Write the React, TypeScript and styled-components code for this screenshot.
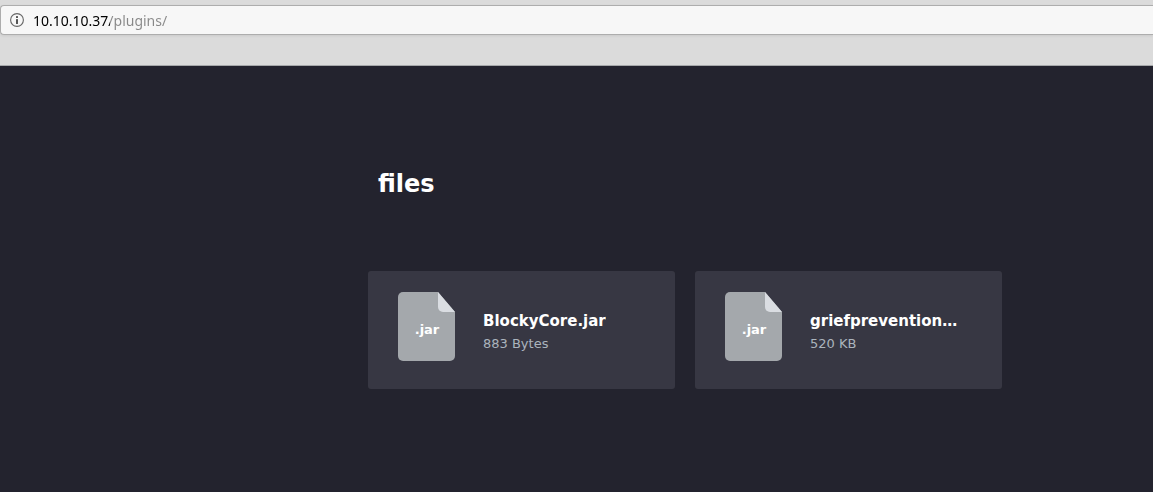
import React from "react";
import styled, { createGlobalStyle } from "styled-components";

const GlobalStyle = createGlobalStyle`
  * { box-sizing: border-box; }
  body {
    margin: 0;
    background: #23232e;
    font-family: "DejaVu Sans", sans-serif;
  }
`;

const Toolbar = styled.header`
  padding: 5px 0 30px;
  background: #dbdbdb;
  border-bottom: 1px solid #a6a8aa;
`;

const AddressBar = styled.label`
  display: flex;
  align-items: center;
  gap: 9px;
  height: 30px;
  padding-left: 9px;
  background: #f7f7f7;
  border: 1px solid #adadad;
  border-right: 0;
  border-radius: 4px 0 0 4px;
  box-shadow: 0 1px 3px rgba(0, 0, 0, 0.08);
`;

const InfoIcon = styled.svg`
  flex: none;
  width: 14px;
  height: 14px;
`;

const Address = styled.input`
  flex: 1;
  min-width: 0;
  padding: 2px 0 0;
  border: 0;
  outline: 0;
  font: 14px/20px "Noto Sans", sans-serif;
  color: transparent;
  caret-color: #000;
  background: linear-gradient(90deg, #000 77px, #888 77px);
  background-clip: text;
  -webkit-background-clip: text;
`;

const Page = styled.main`
  padding: 100px 151px 100px 368px;
`;

const Title = styled.h1`
  margin: 0 0 68px 10px;
  font-size: 24px;
  line-height: 37px;
  color: #fff;
`;

const FileList = styled.ul`
  display: grid;
  grid-template-columns: repeat(2, minmax(0, 1fr));
  gap: 20px;
  margin: 0;
  padding: 0;
  list-style: none;
`;

const FileCard = styled.a`
  display: flex;
  align-items: flex-start;
  gap: 28px;
  height: 118px;
  padding: 21px 30px;
  border-radius: 3px;
  background: #373743;
  text-decoration: none;
`;

const FileIcon = styled.svg`
  flex: none;
  width: 57px;
  height: 69px;
`;

const Details = styled.div`
  min-width: 0;
  padding-top: 18px;
`;

const FileName = styled.div`
  overflow: hidden;
  font-size: 15px;
  font-weight: bold;
  line-height: 22px;
  color: #fff;
  white-space: nowrap;
`;

const FileSize = styled.div`
  font-size: 13px;
  line-height: 24px;
  color: #abb4bd;
`;

const files = [
  { name: "BlockyCore.jar", size: "883 Bytes", type: ".jar" },
  { name: "griefprevention…", size: "520 KB", type: ".jar" },
];

export default function App() {
  return (
    <>
      <GlobalStyle />
      <Toolbar>
        <AddressBar>
          <InfoIcon viewBox="0 0 14 14" aria-hidden="true">
            <circle cx="7" cy="7" r="6.4" fill="none" stroke="#666" strokeWidth="1.1" />
            <rect x="6" y="3" width="2" height="2" rx="0.5" fill="#555" />
            <rect x="6" y="6" width="2" height="5" rx="0.5" fill="#555" />
          </InfoIcon>
          <Address aria-label="Address" type="text" defaultValue="10.10.10.37/plugins/" spellCheck={false} />
        </AddressBar>
      </Toolbar>
      <Page>
        <Title>files</Title>
        <FileList>
          {files.map((file) => (
            <li key={file.name}>
              <FileCard href="#">
                <FileIcon viewBox="0 0 57 69" aria-hidden="true">
                  <path d="M5 0H40L57 20V64a5 5 0 0 1-5 5H5a5 5 0 0 1-5-5V5a5 5 0 0 1 5-5Z" fill="#a4a8ac" />
                  <path d="M40 0L57 20H45a5 5 0 0 1-5-5Z" fill="#dadde2" />
                  <text x="29" y="42" textAnchor="middle" fontSize="13" fontWeight="bold" fill="#fff">
                    {file.type}
                  </text>
                </FileIcon>
                <Details>
                  <FileName>{file.name}</FileName>
                  <FileSize>{file.size}</FileSize>
                </Details>
              </FileCard>
            </li>
          ))}
        </FileList>
      </Page>
    </>
  );
}
